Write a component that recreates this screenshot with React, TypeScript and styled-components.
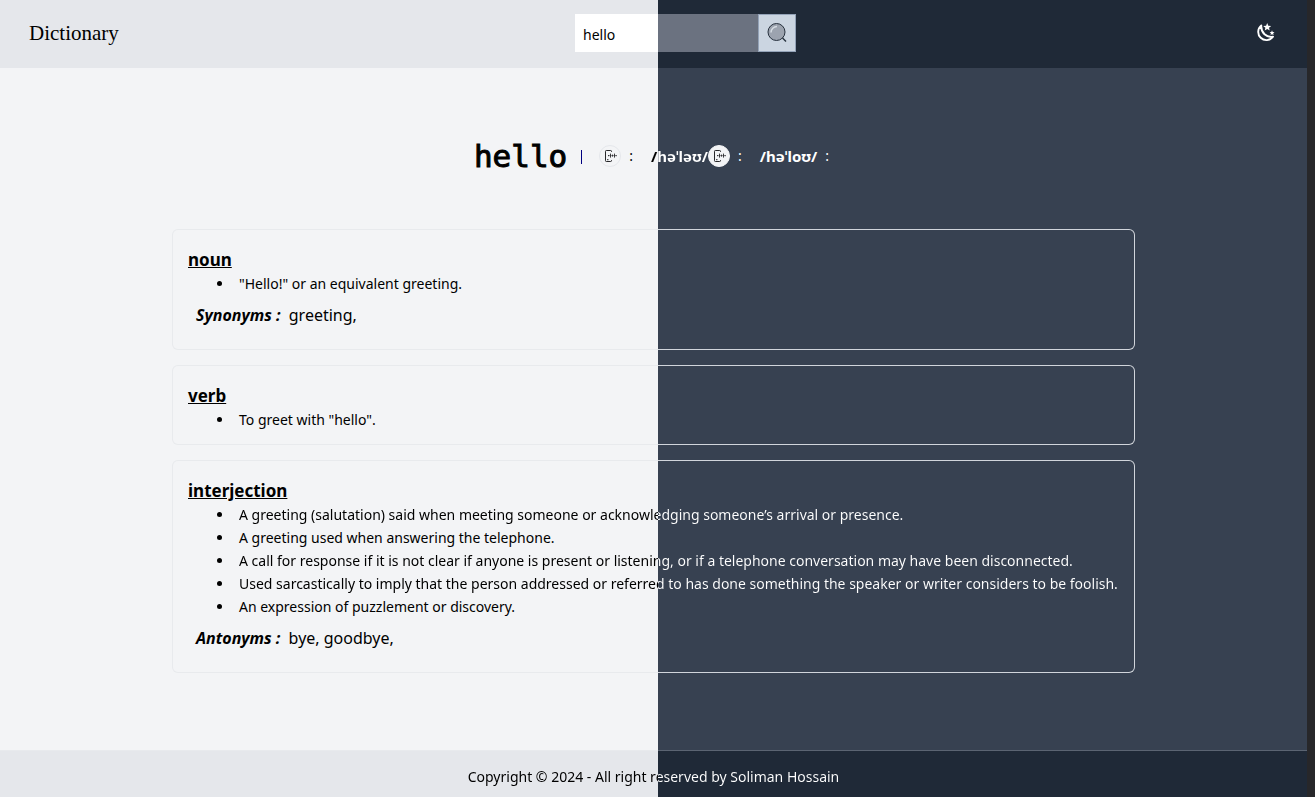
import React, { FormEvent, useState } from 'react';
import styled, { createGlobalStyle, css } from 'styled-components';

const split = (light: string, dark: string) =>
  `linear-gradient(to right, ${light} 50%, ${dark} 50%) fixed`;

const GlobalStyle = createGlobalStyle`
  * { box-sizing: border-box; }
  body {
    margin: 0;
    font-family: 'Noto Sans', 'Open Sans', sans-serif;
    font-size: 14px;
    line-height: 20px;
    color: #000;
  }
  h1, h2, p, ul { margin: 0; padding: 0; }
`;

const Shell = styled.div`
  display: flex;
  flex-direction: column;
  min-height: 100vh;
  border-right: 8px solid #27272a;
  background: ${split('#f3f4f6', '#374151')};
`;

const Header = styled.header`
  display: grid;
  grid-template-columns: 1fr auto 1fr;
  align-items: center;
  height: 68px;
  padding: 0 32px 2px 29px;
  background: ${split('#e5e7eb', '#1f2937')};
`;

const Brand = styled.a`
  font-family: 'Liberation Serif', serif;
  font-size: 21px;
  line-height: 28px;
  color: #000;
  text-decoration: none;
`;

const SearchForm = styled.form`
  display: flex;
  width: 221px;
  height: 38px;
  margin-left: 67px;
`;

const SearchInput = styled.input`
  flex: 1;
  min-width: 0;
  padding: 4px 8px 0;
  border: 0;
  border-radius: 0;
  background: ${split('#ffffff', '#6b7280')};
  font: inherit;
  color: #000;
  outline: none;
`;

const SearchButton = styled.button`
  display: grid;
  place-items: center;
  width: 38px;
  padding: 0;
  border: 1px solid #94a3b8;
  background: #cbd5e1;
`;

const ThemeButton = styled.button`
  justify-self: end;
  display: grid;
  place-items: center;
  width: 20px;
  height: 20px;
  padding: 0;
  border: 0;
  background: none;
  color: #fff;
`;

const Main = styled.main`
  flex: 1;
  display: flex;
  flex-direction: column;
  align-items: center;
`;

const WordRow = styled.section`
  display: flex;
  align-items: center;
  height: 64px;
  margin-top: 56px;
`;

const Word = styled.h1`
  font-family: 'DejaVu Sans Mono', monospace;
  font-size: 31px;
  font-weight: 400;
  line-height: 40px;
  -webkit-text-stroke: 1px #000;
`;

const Divider = styled.span`
  width: 1px;
  height: 14px;
  margin: 2px 17px 0 14px;
  background: #000080;
`;

const PlayButton = styled.button<{ $shade: string }>`
  display: grid;
  place-items: center;
  width: 22px;
  height: 22px;
  padding: 0;
  border: 1px solid ${(p) => p.$shade};
  border-radius: 50%;
  background: #f3f4f6;
  color: #27272a;
`;

const crossing = css`
  background: ${split('#000', '#fff')};
  background-clip: text;
  -webkit-background-clip: text;
  color: transparent;
`;

const Colon = styled.span<{ $dark?: boolean; $last?: boolean }>`
  margin: 0 ${(p) => (p.$last ? 4 : 18)}px 0 8px;
  color: ${(p) => (p.$dark ? '#fff' : '#000')};
`;

const Phonetic = styled.strong<{ $crossing?: boolean }>`
  font-size: 15px;
  font-weight: 700;
  color: #fff;
  ${(p) => p.$crossing && crossing}
`;

const Entries = styled.div`
  display: flex;
  flex-direction: column;
  gap: 15px;
  width: 963px;
  max-width: 100%;
  margin: 41px 0 76px;
`;

const Entry = styled.article`
  padding: 18px 15px 13px;
  border: 1px solid transparent;
  border-radius: 6px;
  background:
    ${split('#f3f4f6', '#374151')} padding-box,
    ${split('#e8eaed', '#d1d5db')} border-box;
`;

const Part = styled.h2`
  font-size: 17px;
  font-weight: 700;
  line-height: 24px;
  text-decoration: underline;
`;

const Meanings = styled.ul`
  padding-left: 46px;
  line-height: 23px;
`;

const Meaning = styled.li`
  padding-left: 5px;
`;

const MeaningText = styled.span<{ $crossing?: boolean }>`
  ${(p) => p.$crossing && crossing}
`;

const Related = styled.p`
  padding: 8px 8px 9px;
  font-size: 16px;
  line-height: 24px;
`;

const RelatedLabel = styled.em`
  margin-right: 4px;
  font-weight: 700;
`;

const Footer = styled.footer`
  height: 47px;
  padding-top: 16px;
  text-align: center;
  border-top: 1px solid transparent;
  background:
    ${split('#e5e7eb', '#1f2937')} padding-box,
    ${split('#e8eaed', '#5b6472')} border-box;
`;

const Copyright = styled.span`
  ${crossing}
`;

const SearchIcon = () => (
  <svg width="22" height="22" viewBox="0 0 22 22" aria-hidden="true">
    <circle cx="10.5" cy="10" r="8.5" fill="#9ca3af" stroke="#27313e" />
    <path d="M5 10.500a6 6 0 0 1 6-6" fill="none" stroke="#d5dbe3" strokeWidth="1.5" />
    <path d="M16.500 16 20 19.500" stroke="#27313e" strokeWidth="1.4" />
  </svg>
);

const MoonIcon = () => (
  <svg width="20" height="20" viewBox="0 0 20 20" fill="none" aria-hidden="true">
    <path
      d="M6.300 2.500A8.200 8.200 0 1 0 18 13.800C11.600 14.900 5.700 9.800 6.300 2.500Z"
      stroke="currentColor"
      strokeWidth="1.9"
      strokeLinejoin="round"
    />
    <path
      d="m12.200 0 1.100 2.700 2.900.2-2.200 1.900.7 2.800-2.500-1.500-2.500 1.500.7-2.800-2.200-1.900 2.900-.2ZM17 7.300l.7 1.600 1.800.2-1.300 1.200.4 1.800-1.600-.9-1.500.9.4-1.800-1.300-1.200 1.700-.2Z"
      fill="currentColor"
    />
  </svg>
);

const VoiceIcon = () => (
  <svg width="14" height="14" viewBox="0 0 14 14" fill="none" stroke="currentColor" aria-hidden="true">
    <path d="M8.500 3V2.300A.8.800 0 0 0 7.700 1.500H3.300a.8.800 0 0 0-.8.800v9.400a.8.800 0 0 0 .8.800h4.400a.8.800 0 0 0 .8-.8V11M4 10.700h1.500" />
    <path d="M5.500 6v1.200M7.500 4.600v4M9.500 5.600v2M11.500 4.600v4M13.200 6v1.200" strokeWidth=".9" />
    <path d="M5.500 6.600h8" strokeWidth=".5" />
  </svg>
);

interface EntryData {
  part: string;
  meanings: { text: string; crossing?: boolean }[];
  related?: { label: string; words: string };
}

const entries: EntryData[] = [
  {
    part: 'noun',
    meanings: [{ text: '"Hello!" or an equivalent greeting.' }],
    related: { label: 'Synonyms :', words: 'greeting,' },
  },
  { part: 'verb', meanings: [{ text: 'To greet with "hello".' }] },
  {
    part: 'interjection',
    meanings: [
      {
        text: 'A greeting (salutation) said when meeting someone or acknowledging someone’s arrival or presence.',
        crossing: true,
      },
      { text: 'A greeting used when answering the telephone.' },
      {
        text: 'A call for response if it is not clear if anyone is present or listening, or if a telephone conversation may have been disconnected.',
        crossing: true,
      },
      {
        text: 'Used sarcastically to imply that the person addressed or referred to has done something the speaker or writer considers to be foolish.',
        crossing: true,
      },
      { text: 'An expression of puzzlement or discovery.' },
    ],
    related: { label: 'Antonyms :', words: 'bye, goodbye,' },
  },
];

export default function App() {
  const [query, setQuery] = useState('hello');

  return (
    <>
      <GlobalStyle />
      <Shell>
        <Header>
          <Brand href="#">Dictionary</Brand>
          <SearchForm role="search" onSubmit={(e: FormEvent) => e.preventDefault()}>
            <SearchInput
              aria-label="Search a word"
              value={query}
              onChange={(e) => setQuery(e.target.value)}
            />
            <SearchButton type="submit" aria-label="Search">
              <SearchIcon />
            </SearchButton>
          </SearchForm>
          <ThemeButton type="button" aria-label="Toggle theme">
            <MoonIcon />
          </ThemeButton>
        </Header>

        <Main>
          <WordRow>
            <Word>hello</Word>
            <Divider />
            <PlayButton type="button" aria-label="Play British pronunciation" $shade="#e5e7eb">
              <VoiceIcon />
            </PlayButton>
            <Colon>:</Colon>
            <Phonetic $crossing>/həˈləʊ/</Phonetic>
            <PlayButton type="button" aria-label="Play American pronunciation" $shade="#f3f4f6">
              <VoiceIcon />
            </PlayButton>
            <Colon $dark>:</Colon>
            <Phonetic>/həˈloʊ/</Phonetic>
            <Colon $dark $last>:</Colon>
          </WordRow>

          <Entries>
            {entries.map((entry) => (
              <Entry key={entry.part}>
                <Part>{entry.part}</Part>
                <Meanings>
                  {entry.meanings.map((m) => (
                    <Meaning key={m.text}>
                      <MeaningText $crossing={m.crossing}>{m.text}</MeaningText>
                    </Meaning>
                  ))}
                </Meanings>
                {entry.related && (
                  <Related>
                    <RelatedLabel>{entry.related.label}</RelatedLabel> {entry.related.words}
                  </Related>
                )}
              </Entry>
            ))}
          </Entries>
        </Main>

        <Footer>
          <Copyright>Copyright © 2024 - All right reserved by Soliman Hossain</Copyright>
        </Footer>
      </Shell>
    </>
  );
}
